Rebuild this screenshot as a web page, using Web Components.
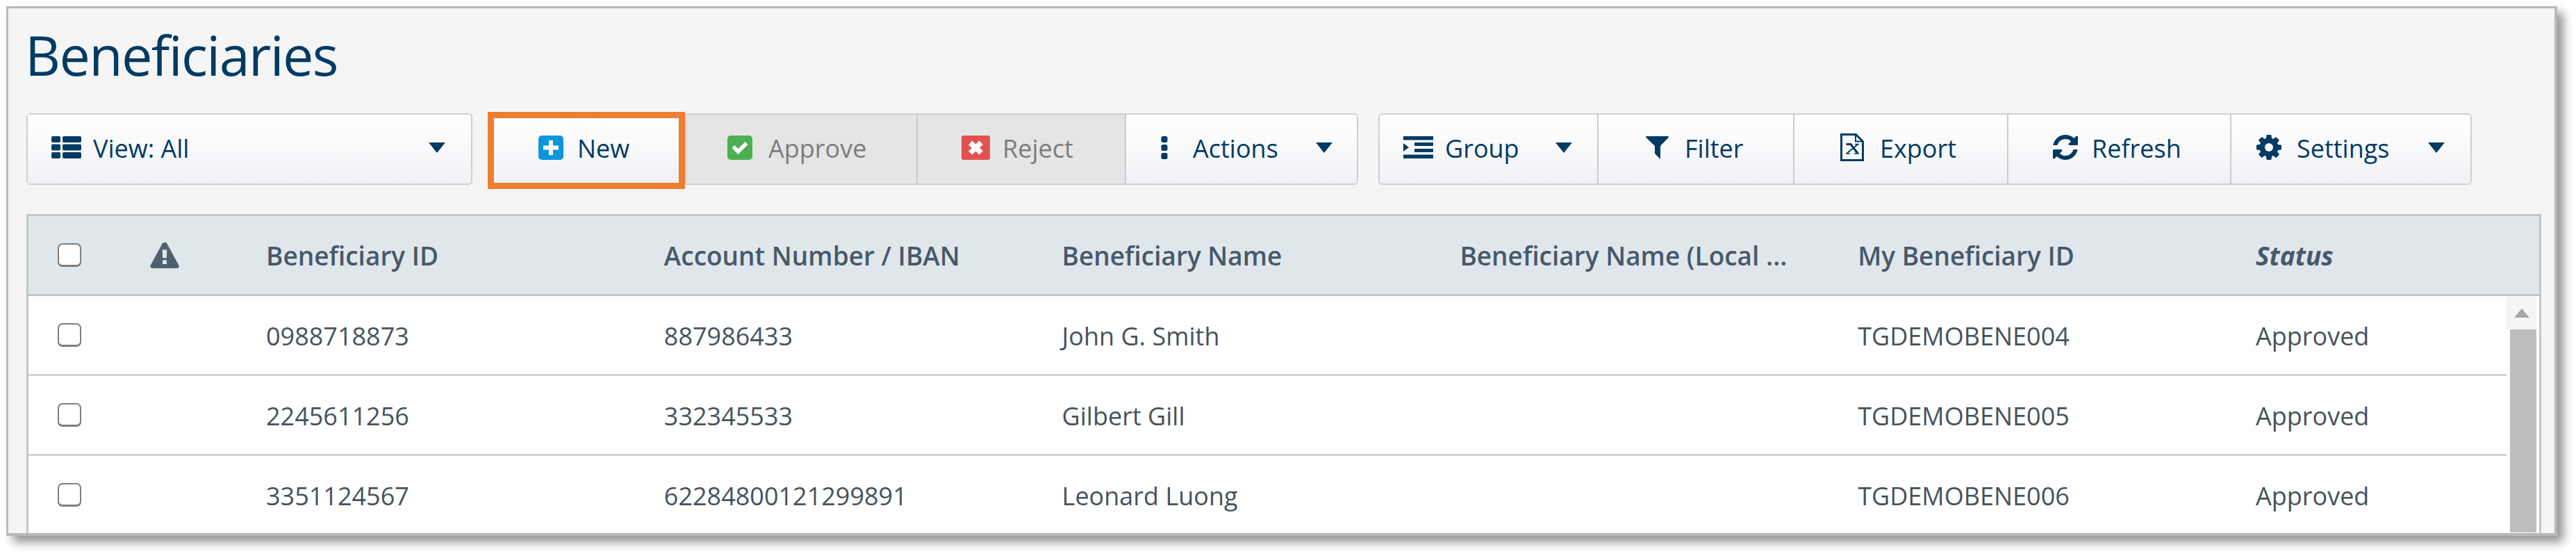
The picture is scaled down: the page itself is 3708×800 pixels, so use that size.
<!doctype html>
<html>
<head>
<meta charset="utf-8">
<title>Beneficiaries</title>
<style>
  html, body { margin: 0; background: #fff; }
  body { font-family: "Open Sans", "Liberation Sans", sans-serif; width: 3708px; height: 800px; overflow: hidden; }
</style>
</head>
<body>
<bene-panel>
  <bene-title slot="title">Beneficiaries</bene-title>
  <bene-toolbar slot="toolbar"></bene-toolbar>
  <bene-grid slot="grid"></bene-grid>
</bene-panel>

<script>
  const NAVY = '#003b64'

  const ICONS = {
    view: '<svg viewBox="0 0 43 32" width="43" height="32"><g fill="currentColor"><rect x="0" y="0" width="13" height="9" rx="2"/><rect x="16" y="0" width="27" height="9" rx="2"/><rect x="0" y="11.500" width="13" height="9" rx="2"/><rect x="16" y="11.500" width="27" height="9" rx="2"/><rect x="0" y="23" width="13" height="9" rx="2"/><rect x="16" y="23" width="27" height="9" rx="2"/></g></svg>',
    plus: '<svg viewBox="0 0 36 35" width="36" height="35"><rect width="36" height="35" rx="5" fill="#0d96dc"/><path d="M15 7h6v7.500h8v6h-8V28h-6v-7.500H7v-6h8z" fill="#fff"/></svg>',
    check: '<svg viewBox="0 0 36 35" width="36" height="35"><rect width="36" height="35" rx="5" fill="#4cb050"/><path d="M6.500 18l4-4 5 5L25.500 9l4 4-14 14z" fill="#fff"/></svg>',
    cross: '<svg viewBox="0 0 41 35" width="41" height="35"><rect width="41" height="35" rx="3" fill="#e25151"/><path d="M15.500 7.500l5 5 5-5 5.500 5.500-5 4.500 5 4.500-5.500 5.500-5-5-5 5L10 22.500l5-4.500-5-4.500z" fill="#fff"/></svg>',
    dots: '<svg viewBox="0 0 10 33" width="10" height="33"><g fill="currentColor"><rect x="0.500" y="0" width="9" height="9" rx="2.500"/><rect x="0.500" y="12" width="9" height="9" rx="2.500"/><rect x="0.500" y="24" width="9" height="9" rx="2.500"/></g></svg>',
    group: '<svg viewBox="0 0 43 32" width="43" height="32"><g fill="currentColor"><rect x="0" y="0" width="43" height="5.500"/><rect x="16" y="9" width="27" height="5"/><rect x="16" y="18" width="27" height="5"/><rect x="0" y="26.500" width="43" height="5.500"/><path d="M0 10l8 6-8 6z"/></g></svg>',
    filter: '<svg viewBox="0 0 33 33" width="33" height="33"><path d="M1 0h31q1 0 1 1.500L21 14v19l-8-8V14L0 1.500Q0 0 1 0z" fill="currentColor"/></svg>',
    file: '<svg viewBox="0 0 34 40" width="34" height="40"><path d="M1.500 1.500h21l10 10v27h-31z" fill="none" stroke="currentColor" stroke-width="3"/><path d="M22 1.500v10h10.500" fill="none" stroke="currentColor" stroke-width="2"/><path d="M9 15.500h6l10 13" fill="none" stroke="currentColor" stroke-width="3.200"/><path d="M25.500 15.500l-16 13" fill="none" stroke="currentColor" stroke-width="1.800"/><path d="M8 15.500h7M21 15.500h6M8 29h6M20 29h7" stroke="currentColor" stroke-width="1.600"/></svg>',
    refresh: '<svg viewBox="0 0 1536 1536" width="36" height="36"><path fill="currentColor" d="M1511 928q0 5-1 7-64 268-268 434.500t-478 166.500q-146 0-282.500-55t-243.500-157l-129 129q-19 19-45 19t-45-19-19-45v-448q0-26 19-45t45-19h448q26 0 45 19t19 45-19 45l-137 137q71 66 161 102t187 36q134 0 250-65t186-179q11-17 53-117 8-23 30-23h192q13 0 22.500 9.500t9.500 22.500zm25-800v448q0 26-19 45t-45 19h-448q-26 0-45-19t-19-45 19-45l138-138q-148-137-349-137-134 0-250 65t-186 179q-11 17-53 117-8 23-30 23h-199q-13 0-22.500-9.500t-9.500-22.500v-7q65-268 270-434.500t480-166.500q146 0 284 55.500t245 156.500l130-129q19-19 45-19t45 19 19 45z"/></svg>',
    gear: '<svg viewBox="128 128 1536 1536" width="36" height="36"><path fill="currentColor" d="M1152 896q0-106-75-181t-181-75-181 75-75 181 75 181 181 75 181-75 75-181zm512-109v222q0 12-8 23t-20 13l-185 28q-19 54-39 91 35 50 107 138 10 12 10 25t-9 23q-27 37-99 108t-94 71q-12 0-26-9l-138-108q-44 23-91 38-16 136-29 186-7 28-36 28h-222q-14 0-24.500-8.500t-11.500-21.500l-28-184q-49-16-90-37l-141 107q-10 9-25 9-14 0-25-11-126-114-165-168-7-10-7-23 0-12 8-23 15-21 51-66.500t54-70.500q-27-50-41-99l-183-27q-13-2-21-12.500t-8-23.500v-222q0-12 8-23t19-13l186-28q14-46 39-92-40-57-107-138-10-12-10-24 0-10 9-23 26-36 98.500-107.500t94.500-71.500q13 0 26 10l138 107q44-23 91-38 16-136 29-186 7-28 36-28h222q14 0 24.500 8.500t11.500 21.500l28 184q49 16 90 37l142-107q9-9 24-9 13 0 25 10 129 119 165 170 7 8 7 22 0 12-8 23-15 21-51 66.500t-54 70.500q26 50 41 98l183 28q13 2 21 12.500t8 23.500z"/></svg>',
    warn: '<svg viewBox="0 64 1792 1600" width="42" height="37"><path fill="currentColor" d="M1024 1375v-190q0-14-9.500-23.500t-22.500-9.500h-192q-13 0-22.500 9.500t-9.500 23.500v190q0 14 9.500 23.500t22.500 9.500h192q13 0 22.500-9.500t9.500-23.500zm-2-374l18-459q0-12-10-19-13-11-24-11h-220q-11 0-24 11-10 7-10 21l17 457q0 10 10 16.500t24 6.500h185q14 0 23.500-6.500t10.500-16.500zm-14-934l768 1408q35 63-2 126-17 29-46.500 46t-63.500 17h-1536q-34 0-63.500-17t-46.500-46q-37-63-2-126l768-1408q17-31 47-49t65-18 65 18 47 49z"/></svg>',
    caret: '<svg viewBox="0 0 24 15" width="24" height="15"><path d="M0 0h24L12 15z" fill="currentColor"/></svg>'
  }

  class BenePanel extends HTMLElement {
    constructor() {
      super()
      this.attachShadow({ mode: 'open' }).innerHTML = `
        <style>
          :host { display: block; box-sizing: border-box; width: 3672px; height: 762px; margin: 9px 0 0 9px;
            background: #f5f5f5; border: solid #b9b9b9; border-width: 3px 4px 4px 3px;
            box-shadow: 9px 9px 13px rgba(0,0,0,.42); overflow: hidden; }
          .in { padding: 28px 19px 0 26px; display: flex; flex-direction: column; }
        </style>
        <div class="in"><slot name="title"></slot><slot name="toolbar"></slot><slot name="grid"></slot></div>`
    }
  }

  class BeneTitle extends HTMLElement {
    constructor() {
      super()
      this.attachShadow({ mode: 'open' }).innerHTML = `
        <style>
          :host { display: block; height: 123px; margin-left: -2px; font-size: 79px; line-height: 78px; color: #003b64; letter-spacing: -1.6px; }
        </style><slot></slot>`
    }
  }

  class ToolBtn extends HTMLElement {
    constructor() {
      super()
      const root = this.attachShadow({ mode: 'open' })
      root.innerHTML = `
        <style>
          :host { display: flex; align-items: center; box-sizing: border-box; height: 100%; position: relative;
            background: linear-gradient(#ffffff 0%, #fbfbfc 35%, #eff1f5 100%);
            color: ${NAVY}; font-size: 36px; border-left: 2px solid #cbcbcb; padding-bottom: 5px; }
          :host(:first-child) { border-left: 0; border-radius: 4px 0 0 4px; }
          :host(:last-child) { border-radius: 0 4px 4px 0; }
          :host([off]) { background: #e5e5e5; color: #7d7d7d; }
          :host([mark])::after { content: ""; position: absolute; left: -10px; top: -4px; width: 284px; height: 111px;
            box-sizing: border-box; border: 9px solid #ed7d31; }
          .ic { display: flex; color: ${NAVY}; flex: none; }
          .lb { white-space: nowrap; padding-top: 3px; }
          .car { display: none; margin-left: auto; color: ${NAVY}; }
          :host([menu]) .car { display: flex; }
        </style>
        <span class="ic"></span><span class="lb"></span><span class="car">${ICONS.caret}</span>`
    }
    connectedCallback() {
      const r = this.shadowRoot
      r.querySelector('.ic').innerHTML = ICONS[this.getAttribute('icon')] || ''
      r.querySelector('.lb').textContent = this.getAttribute('label')
      this.style.width = this.getAttribute('w') + 'px'
      this.style.paddingLeft = this.getAttribute('pl') + 'px'
      this.style.paddingRight = (this.getAttribute('pr') || 0) + 'px'
      r.querySelector('.ic').style.marginRight = this.getAttribute('gap') + 'px'
    }
  }

  class ToolGroup extends HTMLElement {
    constructor() {
      super()
      this.attachShadow({ mode: 'open' }).innerHTML = `
        <style>
          :host { display: flex; box-sizing: border-box; height: 103px; border: 2px solid #cfcfcf; border-radius: 6px; }
        </style><slot></slot>`
    }
  }

  class BeneToolbar extends HTMLElement {
    constructor() {
      super()
      this.attachShadow({ mode: 'open' }).innerHTML = `
        <style>
          :host { display: block; height: 145px; }
          .bar { display: flex; align-items: flex-start; }
        </style>
        <div class="bar">
          <tool-group style="width:642px;margin-right:32px">
            <tool-btn menu icon="view" label="View: All" w="638" pl="34" gap="17" pr="37"></tool-btn>
          </tool-group>
          <tool-group style="width:1243px;margin-right:29px;border-left:0">
            <tool-btn mark icon="plus" label="New" w="274" pl="63" gap="20"></tool-btn>
            <tool-btn off icon="check" label="Approve" w="333" pl="59" gap="23"></tool-btn>
            <tool-btn off icon="cross" label="Reject" w="300" pl="63" gap="18"></tool-btn>
            <tool-btn menu icon="dots" label="Actions" w="334" pl="50" gap="36" pr="35"></tool-btn>
          </tool-group>
          <tool-group style="width:1574px">
            <tool-btn menu icon="group" label="Group" w="313" pl="34" gap="17" pr="36"></tool-btn>
            <tool-btn icon="filter" label="Filter" w="282" pl="68" gap="23"></tool-btn>
            <tool-btn icon="file" label="Export" w="308" pl="66" gap="23"></tool-btn>
            <tool-btn icon="refresh" label="Refresh" w="321" pl="64" gap="20"></tool-btn>
            <tool-btn menu icon="gear" label="Settings" w="346" pl="36" gap="22" pr="37"></tool-btn>
          </tool-group>
        </div>`
    }
  }

  class GridCheck extends HTMLElement {
    constructor() {
      super()
      this.attachShadow({ mode: 'open' }).innerHTML = `
        <style>
          :host { display: block; box-sizing: border-box; width: 34px; height: 34px; background: #fff;
            border: 2px solid #7d7d7d; border-bottom-width: 3px; border-radius: 7px; }
        </style>`
    }
  }

  class GridRow extends HTMLElement {
    constructor() {
      super()
      this.attachShadow({ mode: 'open' }).innerHTML = `
        <style>
          :host { display: grid; grid-template-columns: 175px 167px repeat(5, 572.8px) 1fr; align-items: center;
            box-sizing: border-box; height: 115px; border-bottom: 3px solid #d2d2d2; color: #48525c; font-size: 36px; background: #fff; }
          :host([head]) { background: #e0e7eb; border-bottom: 3px solid #c2c6c9; font-weight: 600; color: #47596a; font-size: 37px; }
          ::slotted(*) { white-space: nowrap; }
        </style>
        <slot></slot>`
    }
  }

  class BeneGrid extends HTMLElement {
    constructor() {
      super()
      const rows = [
        ['0988718873', '887986433', 'John G. Smith', '', 'TGDEMOBENE004', 'Approved'],
        ['2245611256', '332345533', 'Gilbert Gill', '', 'TGDEMOBENE005', 'Approved'],
        ['3351124567', '62284800121299891', 'Leonard Luong', '', 'TGDEMOBENE006', 'Approved']
      ]
      const cell = t => `<span class="t">${t}</span>`
      const body = rows.map(r => `<grid-row><span class="ck"><grid-check></grid-check></span><span></span>${r.map(cell).join('')}</grid-row>`).join('')
      this.attachShadow({ mode: 'open' }).innerHTML = `
        <style>
          :host { display: block; box-sizing: border-box; width: 3620px; height: 470px; border: solid #c2c6c9; border-width: 3px 3px 0 3px; background: #fff; position: relative; overflow: hidden; }
          .ck { padding-left: 42px; display: block; }
          .warn { display: flex; color: #4d6171; }
          .t { padding-top: 3px; }
          i { font-style: italic; font-weight: 700; }
          .body { display: flex; height: 340px; }
          .rows { width: 3567px; }
          .sb { width: 47px; display: flex; flex-direction: column; }
          .up { height: 48px; width: 43px; background: #f5f5f5; display: flex; align-items: center; justify-content: center; }
          .th { flex: 1; width: 38px; margin-left: 5px; background: #bdbdbd; }
        </style>
        <grid-row head>
          <span class="ck"><grid-check></grid-check></span>
          <span class="warn">${ICONS.warn}</span>
          <span>Beneficiary ID</span><span>Account Number / IBAN</span><span>Beneficiary Name</span><span>Beneficiary Name (Local ...</span><span>My Beneficiary ID</span><span><i>Status</i></span>
        </grid-row>
        <div class="body">
          <div class="rows">${body}</div>
          <div class="sb"><div class="up"><svg width="22" height="13" viewBox="0 0 22 13"><path d="M11 0l11 13H0z" fill="#a6a6a6"/></svg></div><div class="th"></div></div>
        </div>`
    }
  }

  customElements.define('bene-panel', BenePanel)
  customElements.define('bene-title', BeneTitle)
  customElements.define('tool-btn', ToolBtn)
  customElements.define('tool-group', ToolGroup)
  customElements.define('bene-toolbar', BeneToolbar)
  customElements.define('grid-check', GridCheck)
  customElements.define('grid-row', GridRow)
  customElements.define('bene-grid', BeneGrid)
</script>
</body>
</html>
